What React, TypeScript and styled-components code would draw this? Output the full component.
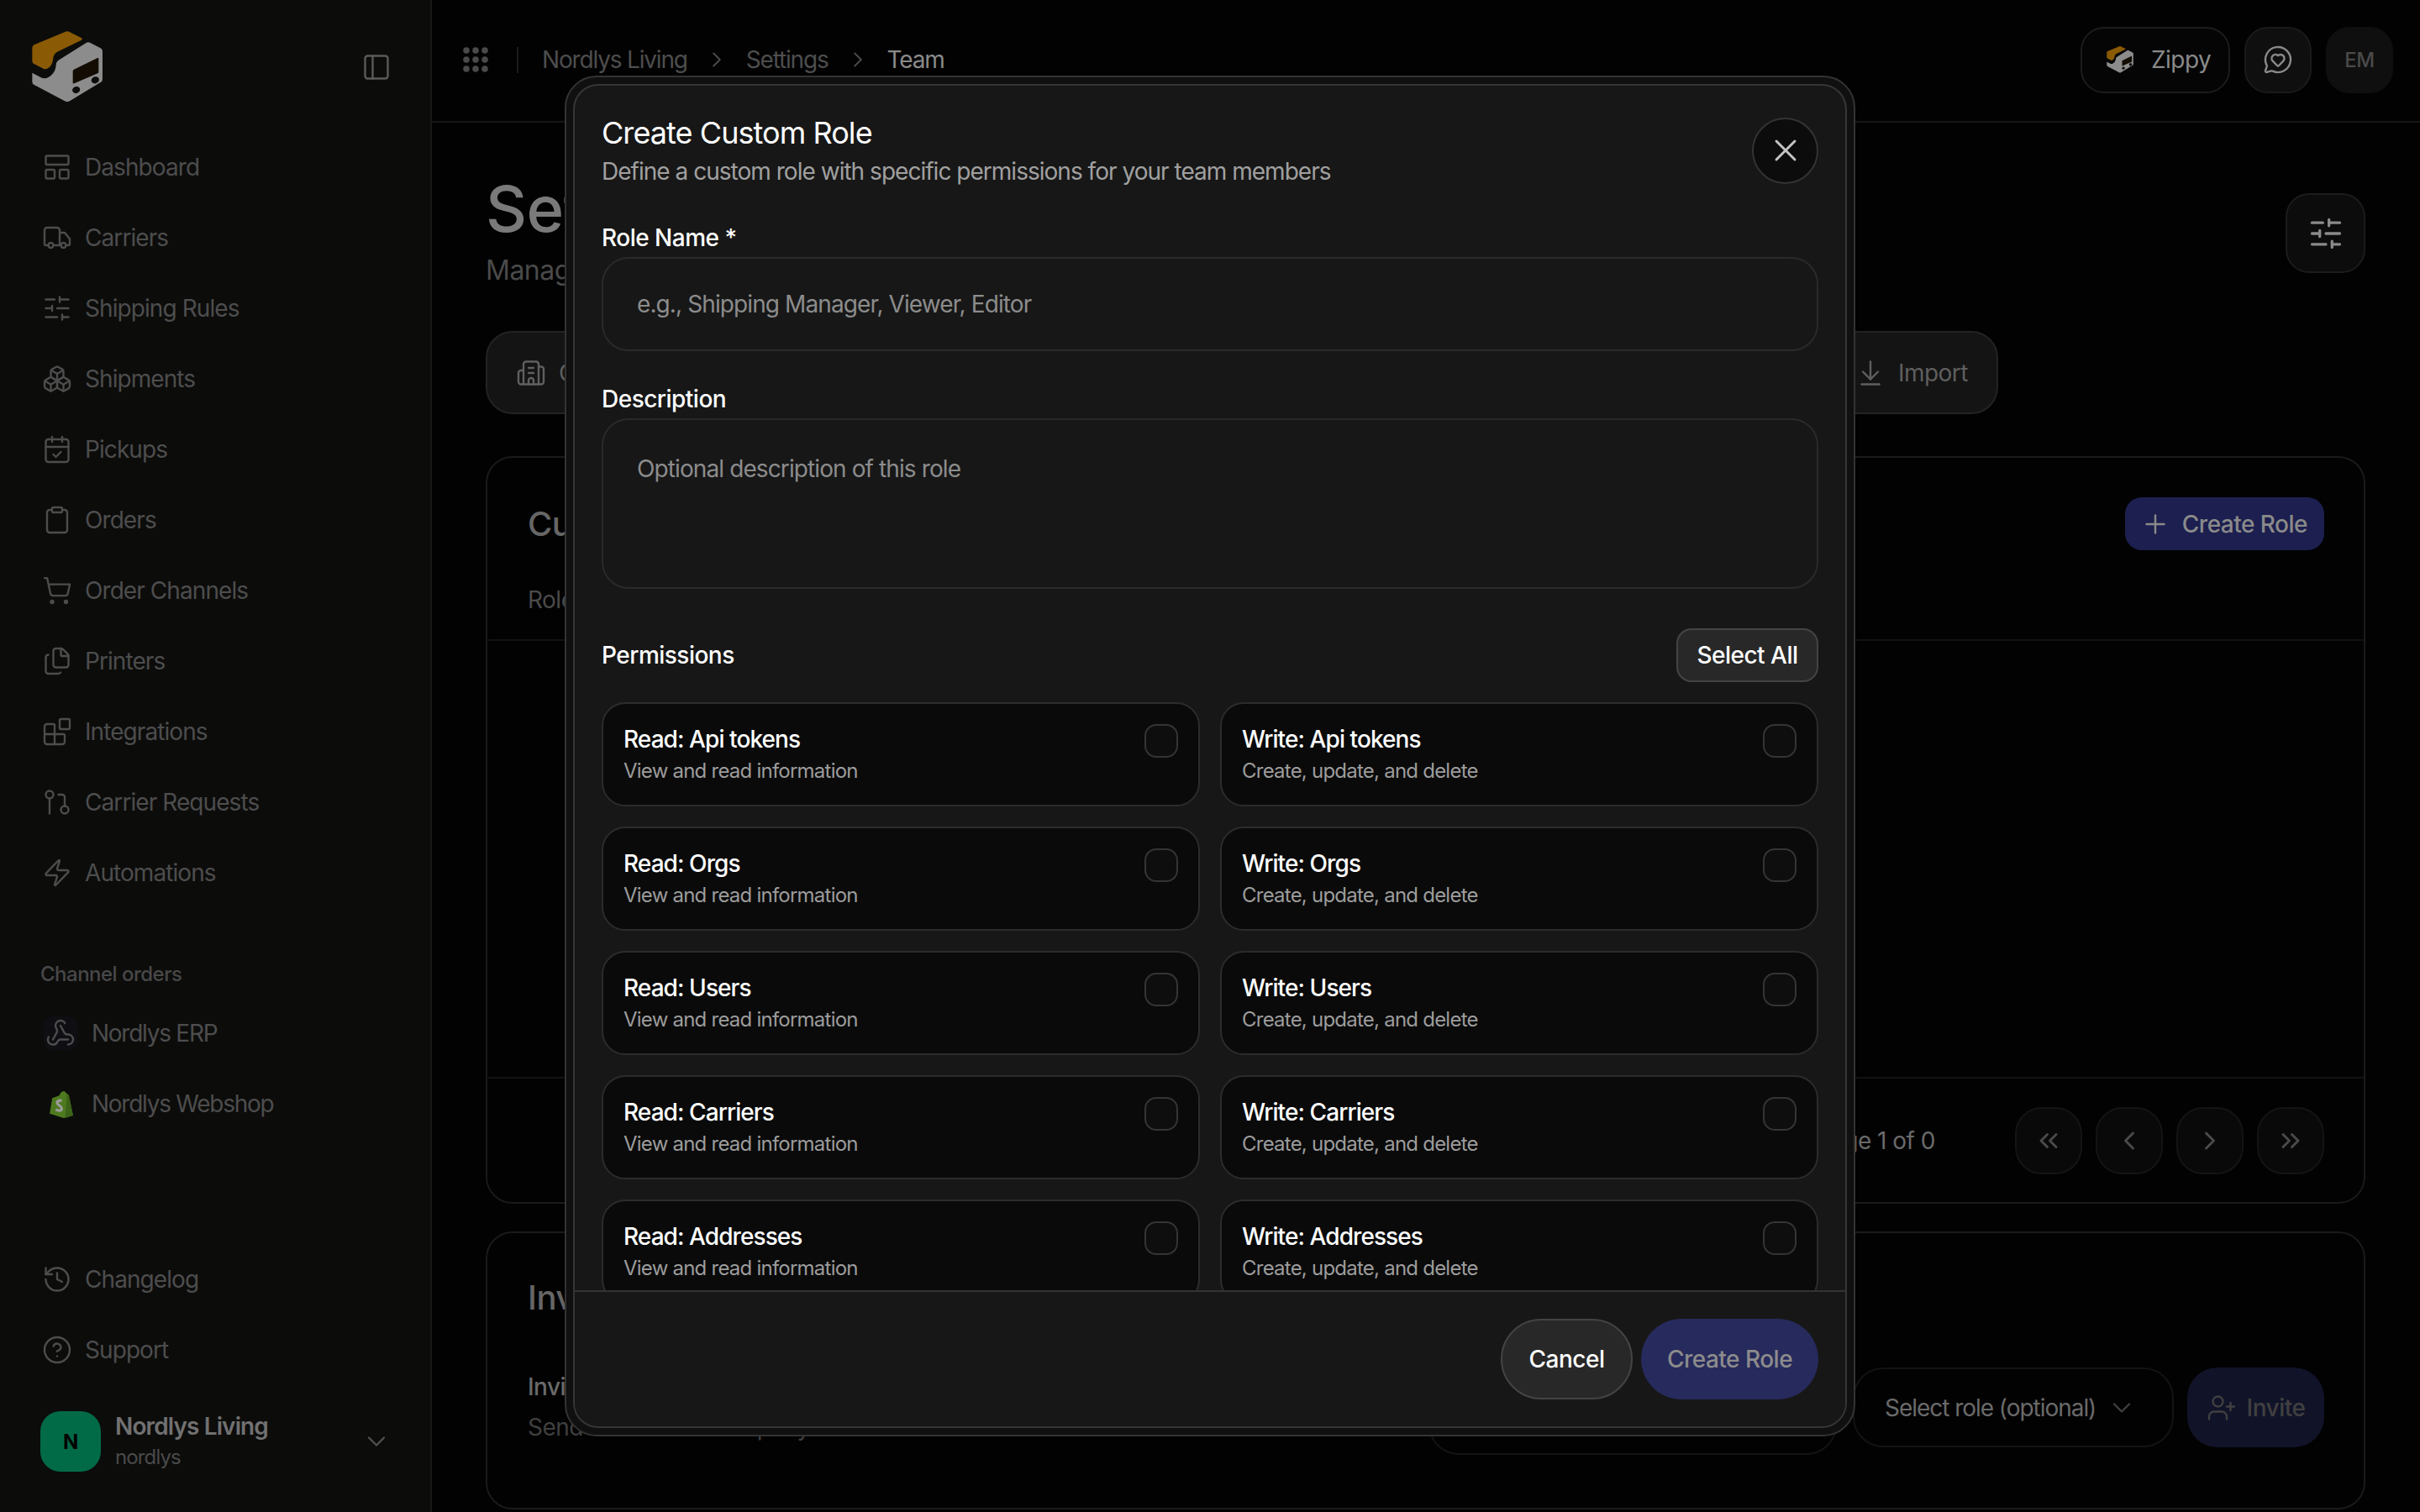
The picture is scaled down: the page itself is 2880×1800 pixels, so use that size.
import React from 'react'
import styled, { createGlobalStyle } from 'styled-components'
import {
  ArrowDownToLine,
  Blocks,
  Boxes,
  Building2,
  CalendarCheck,
  ChevronDown,
  ChevronLeft,
  ChevronRight,
  ChevronsLeft,
  ChevronsRight,
  CircleHelp,
  Clipboard,
  Files,
  GitPullRequest,
  History,
  LayoutPanelTop,
  MessageCircleHeart,
  PanelLeft,
  Plus,
  ShoppingCart,
  SlidersHorizontal,
  Truck,
  UserPlus,
  Webhook,
  X,
  Zap,
} from 'lucide-react'

const GlobalStyle = createGlobalStyle`
  html, body {
    margin: 0;
    height: 100%;
    overflow: hidden;
    background: #020202;
  }
  body, button, input, textarea {
    font-family: Inter, "Liberation Sans", sans-serif;
    letter-spacing: -0.032em;
  }
  * { box-sizing: border-box; }
`

const Shell = styled.div`
  position: relative;
  display: flex;
  width: 2880px;
  height: 1800px;
  overflow: hidden;
`

/* sidebar */

const Sidebar = styled.aside`
  display: flex;
  flex-direction: column;
  flex: 0 0 514px;
  padding-bottom: 48px;
  background: #0c0c0b;
  border-right: 2px solid #181818;
`

const Brand = styled.div`
  display: flex;
  justify-content: space-between;
  height: 157px;
  padding: 35px 46px 0 35px;
  color: #5a5a5a;
`

const ToggleWrap = styled.div`
  display: flex;
  align-items: center;
  height: 90px;
`

const NavItem = styled.div`
  display: flex;
  align-items: center;
  gap: 15px;
  height: 84px;
  padding-left: 50px;
  font-size: 28px;
  letter-spacing: -0.033em;
  color: #4d4d4d;
  svg { flex: none; }
`

const SectionLabel = styled.div`
  margin: 62px 0 11px;
  padding-left: 48px;
  font-size: 24px;
  line-height: 34px;
  font-weight: 500;
  color: #484848;
`

const ChannelItem = styled.div`
  display: flex;
  align-items: center;
  gap: 17px;
  height: 84px;
  padding-left: 52px;
  font-size: 28px;
  letter-spacing: -0.045em;
  color: #4d4d4d;
`

const ChannelIcon = styled.div<{ $tint?: boolean }>`
  display: flex;
  align-items: center;
  justify-content: center;
  width: 40px;
  height: 40px;
  border-radius: 10px;
  background: ${({ $tint }) => ($tint ? '#0f0f13' : 'transparent')};
  color: #4d4d4d;
`

const SideFooter = styled.div`
  margin-top: auto;
`

const Account = styled.div`
  display: flex;
  align-items: center;
  height: 72px;
  margin-top: 31px;
  padding: 0 46px 0 48px;
  color: #4f4f4f;
`

const Avatar = styled.div`
  display: flex;
  align-items: center;
  justify-content: center;
  width: 72px;
  height: 72px;
  border-radius: 24px;
  background: #016b48;
  color: #020202;
  font-size: 24px;
  font-weight: 700;
`

const AccountText = styled.div`
  flex: 1;
  margin-left: 17px;
  letter-spacing: -0.055em;
`

const AccountName = styled.div`
  font-size: 28px;
  line-height: 38px;
  font-weight: 600;
  color: #717171;
`

const AccountSlug = styled.div`
  font-size: 24px;
  line-height: 36px;
  color: #4a4a4a;
`

/* main column */

const Main = styled.main`
  flex: 1;
  min-width: 0;
  background: #020202;
`

const Topbar = styled.header`
  display: flex;
  align-items: center;
  height: 146px;
  padding: 0 32px 2px 37px;
  border-bottom: 2px solid #161616;
`

const VDivider = styled.div`
  width: 2px;
  height: 31px;
  margin: 0 28px 0 34px;
  background: #1c1c1c;
`

const Crumbs = styled.nav`
  display: flex;
  align-items: center;
  gap: 20px;
  flex: 1;
  color: #4a4a4a;
`

const Crumb = styled.span<{ $current?: boolean }>`
  font-size: 28px;
  letter-spacing: -0.042em;
  color: ${({ $current }) => ($current ? '#8a8a8a' : '#4d4d4d')};
`

const TopActions = styled.div`
  display: flex;
  gap: 17px;
`

const ZippyButton = styled.div`
  display: flex;
  align-items: center;
  gap: 20px;
  width: 178px;
  height: 79px;
  padding-left: 28px;
  border: 2px solid #1c1c1c;
  border-radius: 28px;
  background: #050505;
  font-size: 28px;
  color: #8a8a8a;
`

const SquareAction = styled.div<{ $plain?: boolean }>`
  display: flex;
  align-items: center;
  justify-content: center;
  width: 80px;
  height: 79px;
  border: 2px solid ${({ $plain }) => ($plain ? '#0f0f0f' : '#1a1a1a')};
  border-radius: 28px;
  background: #0f0f0f;
  font-size: 24px;
  font-weight: 500;
  color: ${({ $plain }) => ($plain ? '#4a4a4a' : '#8a8a8a')};
`

const Content = styled.div`
  padding: 58px 65px 0 64px;
`

const PageHead = styled.div`
  display: flex;
  justify-content: space-between;
`

const PageTitle = styled.h1`
  margin: 0;
  font-size: 76px;
  line-height: 88px;
  font-weight: 500;
  color: #7a7a7a;
`

const PageSub = styled.p`
  margin: 10px 0 0;
  font-size: 32px;
  line-height: 40px;
  color: #4a4a4a;
`

const FilterButton = styled.div`
  display: flex;
  align-items: center;
  justify-content: center;
  width: 95px;
  height: 95px;
  margin-top: 26px;
  border: 2px solid #1c1c1c;
  border-radius: 28px;
  background: #0c0c0c;
  color: #8a8a8a;
`

const Tabs = styled.div`
  display: flex;
  align-items: center;
  gap: 40px;
  width: 1800px;
  height: 99px;
  margin-top: 52px;
  padding: 0 34px;
  border: 2px solid #232323;
  border-radius: 32px;
  background: #141414;
`

const Tab = styled.div<{ $end?: boolean }>`
  display: flex;
  align-items: center;
  gap: 15px;
  margin-left: ${({ $end }) => ($end ? 'auto' : '0')};
  font-size: 28px;
  color: #5f5f5f;
`

const Panel = styled.section<{ $height: number; $top: number }>`
  display: flex;
  flex-direction: column;
  height: ${({ $height }) => $height}px;
  margin-top: ${({ $top }) => $top}px;
  border: 2px solid #1a1a1a;
  border-radius: 32px;
`

const PanelHead = styled.div`
  display: flex;
  justify-content: space-between;
  height: 218px;
  padding: 47px 47px 0 48px;
  border-bottom: 2px solid #111;
`

const PanelTitle = styled.h2<{ $inset?: boolean }>`
  margin: ${({ $inset }) => ($inset ? '53px 0 0 48px' : '8px 0 0')};
  font-size: 40px;
  line-height: 48px;
  font-weight: 500;
  color: #666;
`

const PanelSub = styled.div`
  margin-top: 48px;
  font-size: 28px;
  line-height: 36px;
  color: #4a4a4a;
`

const CreateButton = styled.div`
  display: flex;
  align-items: center;
  gap: 14px;
  height: 63px;
  padding: 0 20px 0 18px;
  border-radius: 20px;
  background: #1c1f4f;
  font-size: 28px;
  font-weight: 500;
  color: #8a8a8a;
`

const PanelBody = styled.div`
  flex: 1;
`

const Pager = styled.div`
  display: flex;
  align-items: center;
  justify-content: flex-end;
  gap: 16px;
  height: 149px;
  padding-right: 47px;
  border-top: 2px solid #111;
`

const PagerText = styled.span`
  margin-right: 79px;
  font-size: 28px;
  color: #6a6a6a;
`

const PagerButton = styled.div`
  display: flex;
  align-items: center;
  justify-content: center;
  width: 80px;
  height: 80px;
  border: 2px solid #141414;
  border-radius: 32px;
  background: #090909;
  color: #4a4a4a;
`

const InviteRow = styled.div`
  display: flex;
  align-items: flex-start;
  margin-top: 59px;
  padding: 0 47px 0 48px;
`

const InviteCopy = styled.div`
  flex: 1;
  padding-top: 5px;
`

const InviteLabel = styled.div`
  font-size: 28px;
  line-height: 36px;
  font-weight: 500;
  color: #6a6a6a;
`

const InviteHint = styled.div`
  margin-top: 12px;
  font-size: 28px;
  line-height: 36px;
  color: #3f3f3f;
`

const EmailField = styled.div`
  width: 486px;
  height: 104px;
  margin-right: 19px;
  border: 2px solid #131313;
  border-radius: 36px;
`

const RoleSelect = styled.div`
  display: flex;
  align-items: center;
  gap: 13px;
  width: 382px;
  height: 95px;
  padding-left: 36px;
  border: 2px solid #131313;
  border-radius: 36px;
  font-size: 28px;
  letter-spacing: -0.037em;
  color: #6a6a6a;
  svg { color: #3f3f3f; }
`

const InviteButton = styled.div`
  display: flex;
  align-items: center;
  justify-content: center;
  gap: 12px;
  width: 163px;
  height: 95px;
  margin-left: 16px;
  border-radius: 36px;
  background: #111329;
  font-size: 28px;
  font-weight: 500;
  color: #404040;
`

/* dialog */

const Backdrop = styled.div`
  position: absolute;
  inset: 0;
  display: flex;
  align-items: center;
  justify-content: center;
`

const DialogRing = styled.div`
  width: 1536px;
  height: 1620px;
  padding: 8px;
  border: 2px solid #333;
  border-radius: 38px;
  background: #101010;
`

const Dialog = styled.div`
  display: flex;
  flex-direction: column;
  height: 100%;
  overflow: hidden;
  border: 2px solid #363636;
  border-radius: 30px;
  background: #171717;
`

const DialogHead = styled.div`
  display: flex;
  align-items: center;
  justify-content: space-between;
  padding: 34px 32px 0;
`

const DialogTitle = styled.h2`
  margin: 0;
  font-size: 36px;
  line-height: 44px;
  font-weight: 400;
  letter-spacing: -0.026em;
  color: #fff;
`

const DialogSub = styled.p`
  margin: 6px 0 0;
  font-size: 28px;
  line-height: 36px;
  letter-spacing: -0.035em;
  color: #a0a0a0;
`

const CloseButton = styled.div`
  display: flex;
  align-items: center;
  justify-content: center;
  width: 79px;
  height: 79px;
  border: 2px solid #333;
  border-radius: 50%;
  background: #0c0c0c;
  color: #c4c4c4;
`

const DialogBody = styled.div`
  flex: 1;
  min-height: 0;
  overflow: hidden;
  padding: 43px 32px 0;
`

const Label = styled.label`
  display: block;
  margin-bottom: 5px;
  font-size: 28px;
  line-height: 36px;
  font-weight: 500;
  color: #fff;
`

const TextInput = styled.input`
  display: block;
  width: 100%;
  height: 112px;
  margin-bottom: 39px;
  padding: 0 40px;
  border: 2px solid #2a2a2a;
  border-radius: 32px;
  outline: none;
  background: #171717;
  font-size: 28px;
  color: #fff;
  &::placeholder { color: #8c8c8c; opacity: 1; }
`

const TextArea = styled.textarea`
  display: block;
  width: 100%;
  height: 203px;
  padding: 40px 40px 0;
  border: 2px solid #2a2a2a;
  border-radius: 32px;
  outline: none;
  resize: none;
  background: #171717;
  font-size: 28px;
  line-height: 36px;
  color: #fff;
  &::placeholder { color: #8c8c8c; opacity: 1; }
`

const PermissionsHead = styled.div`
  display: flex;
  align-items: center;
  justify-content: space-between;
  margin: 47px 0 24px;
  font-size: 28px;
  font-weight: 500;
  color: #fff;
`

const SelectAll = styled.div`
  display: flex;
  align-items: center;
  justify-content: center;
  width: 169px;
  height: 64px;
  border: 2px solid #444;
  border-radius: 18px;
  background: #282828;
`

const PermissionGrid = styled.div`
  display: grid;
  grid-template-columns: 1fr 1fr;
  gap: 24px;
`

const PermissionCard = styled.div`
  display: flex;
  justify-content: space-between;
  height: 124px;
  padding: 24px 24px 0;
  border: 2px solid #2c2c2c;
  border-radius: 28px;
  background: #0a0a0a;
`

const PermissionName = styled.div`
  font-size: 28px;
  line-height: 36px;
  font-weight: 500;
  letter-spacing: -0.033em;
  color: #fff;
`

const PermissionHint = styled.div`
  margin-top: 2px;
  font-size: 24px;
  line-height: 36px;
  letter-spacing: -0.032em;
  color: #9c9c9c;
`

const Check = styled.div`
  flex: none;
  width: 40px;
  height: 40px;
  border: 2px solid #343434;
  border-radius: 14px;
  background: #0e0e0e;
`

const DialogFooter = styled.div`
  display: flex;
  justify-content: flex-end;
  gap: 10px;
  padding: 32px 32px;
  border-top: 2px solid #333;
  background: #171717;
`

const CancelButton = styled.div`
  display: flex;
  align-items: center;
  justify-content: center;
  width: 157px;
  height: 96px;
  border: 2px solid #444;
  border-radius: 48px;
  background: #282828;
  font-size: 28px;
  font-weight: 500;
  color: #fff;
`

const SubmitButton = styled.div`
  display: flex;
  align-items: center;
  justify-content: center;
  width: 211px;
  height: 96px;
  border-radius: 48px;
  background: #272a5c;
  font-size: 28px;
  font-weight: 500;
  color: #8c8c8c;
`

const LogoMark = ({ size }: { size: number }) => (
  <svg width={size} height={size} viewBox="45 45 270 270">
    <path
      d="M172 54q8-4 16 0l43 22q5 3 0 7l-88 43q-9 5-12 16l-3 16q-3 16-17 26-8 5-16 1l-34-17q-6-3-6-9v-48q0-8 7-11z"
      fill="#8a5a05"
    />
    <path
      d="M249 92q6-3 12 0l38 20q7 3 7 11v100q0 8-7 11l-110 67q-9 5-18 0l-109-58q-7-3-7-11v-32l30 16q14 8 28 0 22-13 26-36l2-14q2-8 10-12z"
      fill="#8c8c8c"
    />
    <path d="M204 188l84-41q4-2 4 3v48q0 3-3 4l-84 36q-5 2-5-3v-40q0-5 4-7z" fill="#130c02" />
    <ellipse cx="212" cy="261" rx="14" ry="12" transform="rotate(-20 212 261)" fill="#0c0c0b" />
    <ellipse cx="280" cy="226" rx="14" ry="12" transform="rotate(-20 280 226)" fill="#0c0c0b" />
  </svg>
)

const ShopifyMark = () => (
  <svg width="29" height="33" viewBox="0 0 28 32">
    <path d="M1 27L4 9l8-3q2-5 6-5l3 3 2 1 5 24-11 3z" fill="#4e7a1f" />
    <path d="M21 4l2 1 5 24-9 3z" fill="#3c6318" />
    <path
      d="M15 12c-4-1-6 1-5 3 1 3 5 3 5 6s-4 3-7 1"
      fill="none"
      stroke="#9c9c9c"
      strokeWidth="3"
    />
  </svg>
)

const AppsGrid = () => (
  <svg width="30" height="30" viewBox="0 0 30 30" fill="#4a4a4a">
    {[4, 15, 26].flatMap((cy) =>
      [4, 15, 26].map((cx) => <circle key={`${cx}-${cy}`} cx={cx} cy={cy} r="3.8" />),
    )}
  </svg>
)

const navItems = [
  { label: 'Dashboard', icon: LayoutPanelTop },
  { label: 'Carriers', icon: Truck },
  { label: 'Shipping Rules', icon: SlidersHorizontal },
  { label: 'Shipments', icon: Boxes },
  { label: 'Pickups', icon: CalendarCheck },
  { label: 'Orders', icon: Clipboard },
  { label: 'Order Channels', icon: ShoppingCart },
  { label: 'Printers', icon: Files },
  { label: 'Integrations', icon: Blocks },
  { label: 'Carrier Requests', icon: GitPullRequest },
  { label: 'Automations', icon: Zap },
]

const resources = ['Api tokens', 'Orgs', 'Users', 'Carriers', 'Addresses', 'Shipments']

const SideNav = () => (
  <Sidebar>
    <Brand>
      <LogoMark size={90} />
      <ToggleWrap>
        <PanelLeft size={36} strokeWidth={1.6} />
      </ToggleWrap>
    </Brand>
    {navItems.map(({ label, icon: Icon }) => (
      <NavItem key={label}>
        <Icon size={36} strokeWidth={1.6} />
        {label}
      </NavItem>
    ))}
    <SectionLabel>Channel orders</SectionLabel>
    <ChannelItem>
      <ChannelIcon $tint>
        <Webhook size={36} strokeWidth={1.6} />
      </ChannelIcon>
      Nordlys ERP
    </ChannelItem>
    <ChannelItem>
      <ChannelIcon>
        <ShopifyMark />
      </ChannelIcon>
      Nordlys Webshop
    </ChannelItem>
    <SideFooter>
      <NavItem>
        <History size={36} strokeWidth={1.6} />
        Changelog
      </NavItem>
      <NavItem>
        <CircleHelp size={36} strokeWidth={1.6} />
        Support
      </NavItem>
      <Account>
        <Avatar>N</Avatar>
        <AccountText>
          <AccountName>Nordlys Living</AccountName>
          <AccountSlug>nordlys</AccountSlug>
        </AccountText>
        <ChevronDown size={36} strokeWidth={1.6} />
      </Account>
    </SideFooter>
  </Sidebar>
)

const TeamPage = () => (
  <Main>
    <Topbar>
      <AppsGrid />
      <VDivider />
      <Crumbs>
        <Crumb>Nordlys Living</Crumb>
        <ChevronRight size={30} strokeWidth={1.6} />
        <Crumb>Settings</Crumb>
        <ChevronRight size={30} strokeWidth={1.6} />
        <Crumb $current>Team</Crumb>
      </Crumbs>
      <TopActions>
        <ZippyButton>
          <LogoMark size={34} />
          Zippy
        </ZippyButton>
        <SquareAction>
          <MessageCircleHeart size={36} strokeWidth={1.6} />
        </SquareAction>
        <SquareAction $plain>EM</SquareAction>
      </TopActions>
    </Topbar>
    <Content>
      <PageHead>
        <div>
          <PageTitle>Settings</PageTitle>
          <PageSub>Manage your team and roles</PageSub>
        </div>
        <FilterButton>
          <SlidersHorizontal size={44} strokeWidth={1.8} />
        </FilterButton>
      </PageHead>
      <Tabs>
        <Tab>
          <Building2 size={36} strokeWidth={1.6} />
          Company
        </Tab>
        <Tab>Team</Tab>
        <Tab>Billing</Tab>
        <Tab $end>
          <ArrowDownToLine size={36} strokeWidth={1.6} />
          Import
        </Tab>
      </Tabs>
      <Panel $height={890} $top={50}>
        <PanelHead>
          <div>
            <PanelTitle>Custom Roles</PanelTitle>
            <PanelSub>Role Name</PanelSub>
          </div>
          <CreateButton>
            <Plus size={36} strokeWidth={1.6} />
            Create Role
          </CreateButton>
        </PanelHead>
        <PanelBody />
        <Pager>
          <PagerText>Page 1 of 0</PagerText>
          <PagerButton>
            <ChevronsLeft size={36} strokeWidth={2} />
          </PagerButton>
          <PagerButton>
            <ChevronLeft size={36} strokeWidth={2} />
          </PagerButton>
          <PagerButton>
            <ChevronRight size={36} strokeWidth={2} />
          </PagerButton>
          <PagerButton>
            <ChevronsRight size={36} strokeWidth={2} />
          </PagerButton>
        </Pager>
      </Panel>
      <Panel $height={331} $top={33}>
        <PanelTitle $inset>Invite Team Members</PanelTitle>
        <InviteRow>
          <InviteCopy>
            <InviteLabel>Invite by email</InviteLabel>
            <InviteHint>Send invites to a company</InviteHint>
          </InviteCopy>
          <EmailField />
          <RoleSelect>
            Select role (optional)
            <ChevronDown size={36} strokeWidth={1.6} />
          </RoleSelect>
          <InviteButton>
            <UserPlus size={36} strokeWidth={1.6} />
            Invite
          </InviteButton>
        </InviteRow>
      </Panel>
    </Content>
  </Main>
)

const CreateRoleDialog = () => (
  <Backdrop>
    <DialogRing>
      <Dialog>
        <DialogHead>
          <div>
            <DialogTitle>Create Custom Role</DialogTitle>
            <DialogSub>Define a custom role with specific permissions for your team members</DialogSub>
          </div>
          <CloseButton>
            <X size={44} strokeWidth={1.6} />
          </CloseButton>
        </DialogHead>
        <DialogBody>
          <Label>Role Name *</Label>
          <TextInput placeholder="e.g., Shipping Manager, Viewer, Editor" readOnly />
          <Label>Description</Label>
          <TextArea placeholder="Optional description of this role" readOnly />
          <PermissionsHead>
            Permissions
            <SelectAll>Select All</SelectAll>
          </PermissionsHead>
          <PermissionGrid>
            {resources.flatMap((name) => [
              <PermissionCard key={`read-${name}`}>
                <div>
                  <PermissionName>Read: {name}</PermissionName>
                  <PermissionHint>View and read information</PermissionHint>
                </div>
                <Check />
              </PermissionCard>,
              <PermissionCard key={`write-${name}`}>
                <div>
                  <PermissionName>Write: {name}</PermissionName>
                  <PermissionHint>Create, update, and delete</PermissionHint>
                </div>
                <Check />
              </PermissionCard>,
            ])}
          </PermissionGrid>
        </DialogBody>
        <DialogFooter>
          <CancelButton>Cancel</CancelButton>
          <SubmitButton>Create Role</SubmitButton>
        </DialogFooter>
      </Dialog>
    </DialogRing>
  </Backdrop>
)

export default function App() {
  return (
    <Shell>
      <GlobalStyle />
      <SideNav />
      <TeamPage />
      <CreateRoleDialog />
    </Shell>
  )
}
